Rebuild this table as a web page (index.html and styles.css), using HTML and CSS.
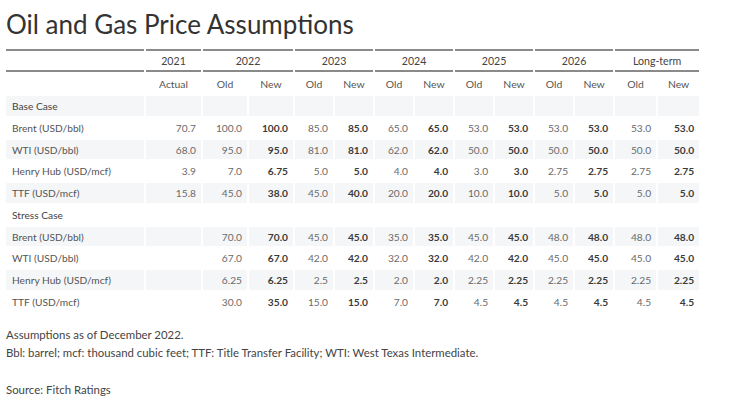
FILE: index.html
```html
<!DOCTYPE html>
<html lang="en">
<head>
<meta charset="utf-8">
<title>Oil and Gas Price Assumptions</title>
<link rel="stylesheet" href="styles.css">
</head>
<body>
<div class="page">
  <h1 class="title">Oil and Gas Price Assumptions</h1>
  <table class="prices">
    <colgroup>
      <col class="c-label">
      <col class="c-actual">
      <col class="c-wide"><col class="c-wide">
      <col class="c-std"><col class="c-std">
      <col class="c-std"><col class="c-std">
      <col class="c-std"><col class="c-std">
      <col class="c-std"><col class="c-std">
      <col class="c-lt"><col class="c-lt">
    </colgroup>
    <thead>
      <tr class="years">
        <th></th>
        <th>2021</th>
        <th colspan="2">2022</th>
        <th colspan="2">2023</th>
        <th colspan="2">2024</th>
        <th colspan="2">2025</th>
        <th colspan="2">2026</th>
        <th colspan="2">Long-term</th>
      </tr>
      <tr class="sub">
        <th></th>
        <th>Actual</th>
        <th>Old</th><th>New</th>
        <th>Old</th><th>New</th>
        <th>Old</th><th>New</th>
        <th>Old</th><th>New</th>
        <th>Old</th><th>New</th>
        <th>Old</th><th>New</th>
      </tr>
    </thead>
    <tbody>
      <tr class="shade section"><td>Base Case</td><td></td><td></td><td></td><td></td><td></td><td></td><td></td><td></td><td></td><td></td><td></td><td></td><td></td></tr>
      <tr><td>Brent (USD/bbl)</td><td>70.7</td><td>100.0</td><td class="b">100.0</td><td>85.0</td><td class="b">85.0</td><td>65.0</td><td class="b">65.0</td><td>53.0</td><td class="b">53.0</td><td>53.0</td><td class="b">53.0</td><td>53.0</td><td class="b">53.0</td></tr>
      <tr class="shade"><td>WTI (USD/bbl)</td><td>68.0</td><td>95.0</td><td class="b">95.0</td><td>81.0</td><td class="b">81.0</td><td>62.0</td><td class="b">62.0</td><td>50.0</td><td class="b">50.0</td><td>50.0</td><td class="b">50.0</td><td>50.0</td><td class="b">50.0</td></tr>
      <tr><td>Henry Hub (USD/mcf)</td><td>3.9</td><td>7.0</td><td class="b">6.75</td><td>5.0</td><td class="b">5.0</td><td>4.0</td><td class="b">4.0</td><td>3.0</td><td class="b">3.0</td><td>2.75</td><td class="b">2.75</td><td>2.75</td><td class="b">2.75</td></tr>
      <tr class="shade"><td>TTF (USD/mcf)</td><td>15.8</td><td>45.0</td><td class="b">38.0</td><td>45.0</td><td class="b">40.0</td><td>20.0</td><td class="b">20.0</td><td>10.0</td><td class="b">10.0</td><td>5.0</td><td class="b">5.0</td><td>5.0</td><td class="b">5.0</td></tr>
      <tr class="section"><td>Stress Case</td><td></td><td></td><td></td><td></td><td></td><td></td><td></td><td></td><td></td><td></td><td></td><td></td><td></td></tr>
      <tr class="shade"><td>Brent (USD/bbl)</td><td></td><td>70.0</td><td class="b">70.0</td><td>45.0</td><td class="b">45.0</td><td>35.0</td><td class="b">35.0</td><td>45.0</td><td class="b">45.0</td><td>48.0</td><td class="b">48.0</td><td>48.0</td><td class="b">48.0</td></tr>
      <tr><td>WTI (USD/bbl)</td><td></td><td>67.0</td><td class="b">67.0</td><td>42.0</td><td class="b">42.0</td><td>32.0</td><td class="b">32.0</td><td>42.0</td><td class="b">42.0</td><td>45.0</td><td class="b">45.0</td><td>45.0</td><td class="b">45.0</td></tr>
      <tr class="shade"><td>Henry Hub (USD/mcf)</td><td></td><td>6.25</td><td class="b">6.25</td><td>2.5</td><td class="b">2.5</td><td>2.0</td><td class="b">2.0</td><td>2.25</td><td class="b">2.25</td><td>2.25</td><td class="b">2.25</td><td>2.25</td><td class="b">2.25</td></tr>
      <tr><td>TTF (USD/mcf)</td><td></td><td>30.0</td><td class="b">35.0</td><td>15.0</td><td class="b">15.0</td><td>7.0</td><td class="b">7.0</td><td>4.5</td><td class="b">4.5</td><td>4.5</td><td class="b">4.5</td><td>4.5</td><td class="b">4.5</td></tr>
    </tbody>
  </table>
  <div class="notes">
    <p>Assumptions as of December 2022.</p>
    <p>Bbl: barrel; mcf: thousand cubic feet; TTF: Title Transfer Facility; WTI: West Texas Intermediate.</p>
    <p class="source">Source: Fitch Ratings</p>
  </div>
</div>
</body>
</html>
```
FILE: styles.css
```css
html, body {
  margin: 0;
  padding: 0;
  background: #ffffff;
}

body {
  font-family: Lato, "Open Sans", "Liberation Sans", sans-serif;
  color: #555555;
}

.page {
  padding: 9px 4px 0 4px;
}

.title {
  margin: 0 0 7px 2px;
  font-size: 26px;
  font-weight: 400;
  line-height: 1.2;
  color: #333333;
}

.prices {
  table-layout: fixed;
  border-collapse: separate;
  border-spacing: 2px;
  width: 697px;
  font-size: 10.2px;
}

.c-label { width: 138px; }
.c-actual { width: 55px; }
.c-wide { width: 44px; }
.c-std { width: 38px; }
.c-lt { width: 41px; }

.prices th {
  font-weight: 400;
  text-align: center;
  padding: 0;
  color: #555555;
}

.years th {
  border-top: 2px solid #8a8a8a;
  border-bottom: 2px solid #8a8a8a;
  height: 19px;
  font-size: 10.6px;
  color: #444444;
}

.sub th {
  height: 20px;
  font-size: 10.4px;
}

.prices td {
  height: 19.75px;
  padding: 0 5px 0 0;
  text-align: right;
  color: #6a6a6a;
  white-space: nowrap;
}

.prices td:first-child {
  text-align: left;
  padding: 0 0 0 6px;
  color: #555555;
}

.prices td.b {
  font-weight: 700;
  color: #3a3a3a;
}

.section td:first-child {
  color: #444444;
}

.shade td {
  background: #f4f6f8;
}

.notes {
  margin-top: 12px;
  padding-left: 2px;
  font-size: 11.4px;
  line-height: 18.5px;
  color: #444444;
}

.notes p {
  margin: 0;
}

.notes .source {
  margin-top: 18.5px;
}
```
